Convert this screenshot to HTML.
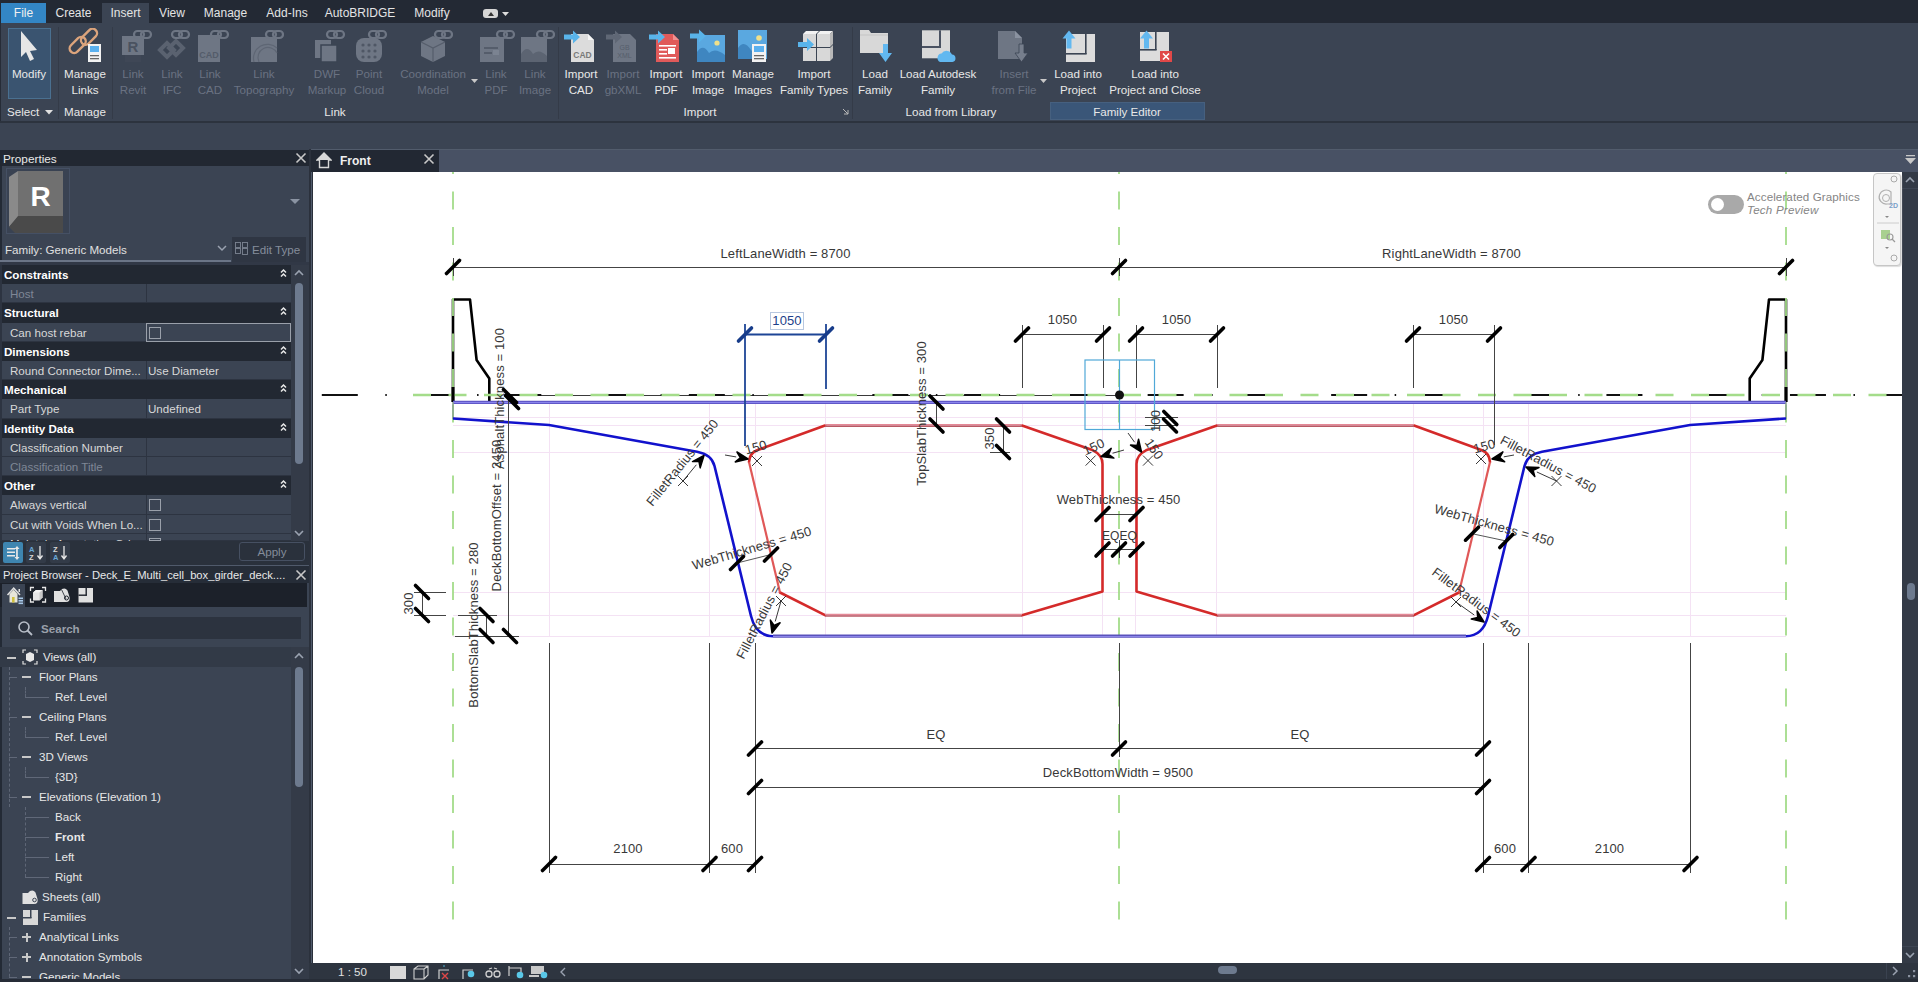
<!DOCTYPE html>
<html><head><meta charset="utf-8"><style>
html,body{margin:0;padding:0;width:1918px;height:982px;overflow:hidden;background:#3b4453;font-family:"Liberation Sans",sans-serif}
.r{position:absolute;display:block}
.t{position:absolute;white-space:nowrap;line-height:16px}
</style></head><body>
<div class="r" style="left:0px;top:0px;width:1918px;height:23px;background:#232934;"></div>
<div class="r" style="left:1px;top:3px;width:45px;height:20px;background:#3386c5;"></div>
<div class="r" style="left:102px;top:3px;width:47px;height:20px;background:#3b4453;"></div>
<div class="t" style="left:-176.5px;top:5px;width:400px;text-align:center;font-size:12px;color:#f0f0f0;font-weight:400;">File</div>
<div class="t" style="left:-126.5px;top:5px;width:400px;text-align:center;font-size:12px;color:#e4e4e4;font-weight:400;">Create</div>
<div class="t" style="left:-74.5px;top:5px;width:400px;text-align:center;font-size:12px;color:#e4e4e4;font-weight:400;">Insert</div>
<div class="t" style="left:-28px;top:5px;width:400px;text-align:center;font-size:12px;color:#e4e4e4;font-weight:400;">View</div>
<div class="t" style="left:25.5px;top:5px;width:400px;text-align:center;font-size:12px;color:#e4e4e4;font-weight:400;">Manage</div>
<div class="t" style="left:87px;top:5px;width:400px;text-align:center;font-size:12px;color:#e4e4e4;font-weight:400;">Add-Ins</div>
<div class="t" style="left:160px;top:5px;width:400px;text-align:center;font-size:12px;color:#e4e4e4;font-weight:400;">AutoBRIDGE</div>
<div class="t" style="left:232px;top:5px;width:400px;text-align:center;font-size:12px;color:#e4e4e4;font-weight:400;">Modify</div>
<div class="r" style="left:483px;top:9px;width:15px;height:9px;background:#d6d6d6;border-radius:3px"></div>
<svg class="r" style="left:486px;top:10px;" width="10" height="7" viewBox="0 0 10 7"><path d="M2 6 L5 2 L8 6Z" fill="#333"/></svg>
<svg class="r" style="left:502px;top:12px;" width="7" height="5" viewBox="0 0 7 5"><path d="M0 0 L7 0 L3.5 4Z" fill="#ddd"/></svg>
<div class="r" style="left:0px;top:23px;width:1918px;height:98px;background:#3b4453;"></div>
<div class="r" style="left:0px;top:23px;width:1px;height:959px;background:#262c37;"></div>
<div class="r" style="left:0px;top:121px;width:1918px;height:1.5px;background:#2c333e;"></div>
<div class="r" style="left:0px;top:122.5px;width:1918px;height:26.5px;background:#3b4453;"></div>
<div class="r" style="left:0px;top:149px;width:1918px;height:1px;background:#525c6c;"></div>
<div class="r" style="left:58px;top:27px;width:1px;height:92px;background:#343b48;"></div>
<div class="r" style="left:112px;top:27px;width:1px;height:92px;background:#343b48;"></div>
<div class="r" style="left:558px;top:27px;width:1px;height:92px;background:#343b48;"></div>
<div class="r" style="left:852px;top:27px;width:1px;height:92px;background:#343b48;"></div>
<div class="r" style="left:8px;top:28px;width:43px;height:71px;background:#3a5470;box-sizing:border-box;border:1px solid #4a7090"></div>
<div class="r" style="left:1050px;top:102px;width:155px;height:18px;background:#3a5678;box-sizing:border-box;border:1px solid #46607f"></div>
<svg class="r" style="left:9px;top:28px;" width="40" height="36" viewBox="0 0 40 36"><path d="M12 3 L12 29 L17 24 L21 33 L25 31 L21 23 L28 22 Z" fill="#e6e6e6"/></svg>
<div class="t" style="left:-171px;top:66px;width:400px;text-align:center;font-size:11.6px;color:#e8e8e8;font-weight:400;">Modify</div>
<svg class="r" style="left:65px;top:28px;" width="40" height="36" viewBox="0 0 40 36"><g fill="none" stroke="#dca47c" stroke-width="2.4"><rect x="3.2" y="12.4" width="19" height="9" rx="4.5" transform="rotate(-45 12.7 16.9)"/><rect x="14.5" y="4.3" width="19" height="9" rx="4.5" transform="rotate(-45 24 8.8)"/></g><rect x="23" y="16" width="13" height="18" fill="#f2f2f2"/><rect x="25" y="18" width="9" height="6" fill="#5ab0ee"/><rect x="25" y="27" width="9" height="1.3" fill="#666"/><rect x="25" y="30" width="9" height="1.3" fill="#666"/></svg>
<div class="t" style="left:-115px;top:66px;width:400px;text-align:center;font-size:11.6px;color:#e8e8e8;font-weight:400;">Manage</div>
<div class="t" style="left:-115px;top:82px;width:400px;text-align:center;font-size:11.6px;color:#e8e8e8;font-weight:400;">Links</div>
<svg class="r" style="left:113px;top:28px;" width="40" height="36" viewBox="0 0 40 36"><rect x="9" y="8" width="22" height="19" fill="#6e7684"/><text x="20" y="24" font-family="Liberation Sans" font-weight="700" font-size="15" fill="#4a5260" text-anchor="middle">R</text><rect x="12" y="27" width="16" height="7" fill="#3f4756"/><g fill="none" stroke="#6e7684" stroke-width="2.2"><rect x="21" y="3" width="10" height="7" rx="3.5"/><rect x="28" y="3" width="10" height="7" rx="3.5"/></g></svg>
<div class="t" style="left:-67px;top:66px;width:400px;text-align:center;font-size:11.6px;color:#6a7282;font-weight:400;">Link</div>
<div class="t" style="left:-67px;top:82px;width:400px;text-align:center;font-size:11.6px;color:#6a7282;font-weight:400;">Revit</div>
<svg class="r" style="left:152px;top:28px;" width="40" height="36" viewBox="0 0 40 36"><g fill="none" stroke="#5a6270" stroke-width="4"><path d="M8 22 L15 15 L22 22 L15 29Z"/><path d="M17 20 L24 13 L31 20 L24 27Z"/></g><g fill="none" stroke="#6e7684" stroke-width="2.2"><rect x="20" y="3" width="10" height="7" rx="3.5"/><rect x="27" y="3" width="10" height="7" rx="3.5"/></g></svg>
<div class="t" style="left:-28px;top:66px;width:400px;text-align:center;font-size:11.6px;color:#6a7282;font-weight:400;">Link</div>
<div class="t" style="left:-28px;top:82px;width:400px;text-align:center;font-size:11.6px;color:#6a7282;font-weight:400;">IFC</div>
<svg class="r" style="left:190px;top:28px;" width="40" height="36" viewBox="0 0 40 36"><rect x="8" y="7" width="22" height="27" fill="#6e7684"/><text x="19" y="30" font-family="Liberation Sans" font-weight="700" font-size="9" fill="#545c6a" text-anchor="middle">CAD</text><g fill="none" stroke="#6e7684" stroke-width="2.2"><rect x="21" y="3" width="10" height="7" rx="3.5"/><rect x="28" y="3" width="10" height="7" rx="3.5"/></g></svg>
<div class="t" style="left:10px;top:66px;width:400px;text-align:center;font-size:11.6px;color:#6a7282;font-weight:400;">Link</div>
<div class="t" style="left:10px;top:82px;width:400px;text-align:center;font-size:11.6px;color:#6a7282;font-weight:400;">CAD</div>
<svg class="r" style="left:244px;top:28px;" width="40" height="36" viewBox="0 0 40 36"><rect x="7" y="9" width="26" height="25" fill="#6e7684"/><g fill="none" stroke="#5e6674" stroke-width="1.2"><path d="M10 34 A14 14 0 0 1 33 20"/><path d="M15 34 A10 10 0 0 1 33 25"/></g><g fill="none" stroke="#6e7684" stroke-width="2.2"><rect x="22" y="3" width="10" height="7" rx="3.5"/><rect x="29" y="3" width="10" height="7" rx="3.5"/></g></svg>
<div class="t" style="left:64px;top:66px;width:400px;text-align:center;font-size:11.6px;color:#6a7282;font-weight:400;">Link</div>
<div class="t" style="left:64px;top:82px;width:400px;text-align:center;font-size:11.6px;color:#6a7282;font-weight:400;">Topography</div>
<svg class="r" style="left:307px;top:28px;" width="40" height="36" viewBox="0 0 40 36"><rect x="8" y="12" width="16" height="18" fill="#6e7684"/><rect x="14" y="17" width="16" height="17" fill="#6e7684" stroke="#3b4453" stroke-width="1.5"/><g fill="none" stroke="#6e7684" stroke-width="2.2"><rect x="20" y="3" width="10" height="7" rx="3.5"/><rect x="27" y="3" width="10" height="7" rx="3.5"/></g></svg>
<div class="t" style="left:127px;top:66px;width:400px;text-align:center;font-size:11.6px;color:#6a7282;font-weight:400;">DWF</div>
<div class="t" style="left:127px;top:82px;width:400px;text-align:center;font-size:11.6px;color:#6a7282;font-weight:400;">Markup</div>
<svg class="r" style="left:349px;top:28px;" width="40" height="36" viewBox="0 0 40 36"><rect x="7" y="10" width="26" height="24" rx="8" fill="#6e7684"/><g fill="#4f5765"><circle cx="14" cy="17" r="1.6"/><circle cx="20" cy="17" r="1.6"/><circle cx="26" cy="17" r="1.6"/><circle cx="14" cy="23" r="1.6"/><circle cx="20" cy="23" r="1.6"/><circle cx="26" cy="23" r="1.6"/><circle cx="14" cy="29" r="1.6"/><circle cx="20" cy="29" r="1.6"/><circle cx="26" cy="29" r="1.6"/></g><g fill="none" stroke="#6e7684" stroke-width="2.2"><rect x="20" y="3" width="10" height="7" rx="3.5"/><rect x="27" y="3" width="10" height="7" rx="3.5"/></g></svg>
<div class="t" style="left:169px;top:66px;width:400px;text-align:center;font-size:11.6px;color:#6a7282;font-weight:400;">Point</div>
<div class="t" style="left:169px;top:82px;width:400px;text-align:center;font-size:11.6px;color:#6a7282;font-weight:400;">Cloud</div>
<svg class="r" style="left:413px;top:28px;" width="40" height="36" viewBox="0 0 40 36"><path d="M20 8 L32 14 L32 28 L20 34 L8 28 L8 14Z" fill="#6e7684"/><path d="M8 14 L20 20 L32 14 M20 20 V34" stroke="#555d6b" stroke-width="1.2" fill="none"/><g fill="none" stroke="#6e7684" stroke-width="2.2"><rect x="22" y="3" width="10" height="7" rx="3.5"/><rect x="29" y="3" width="10" height="7" rx="3.5"/></g></svg>
<div class="t" style="left:233px;top:66px;width:400px;text-align:center;font-size:11.6px;color:#6a7282;font-weight:400;">Coordination</div>
<div class="t" style="left:233px;top:82px;width:400px;text-align:center;font-size:11.6px;color:#6a7282;font-weight:400;">Model</div>
<svg class="r" style="left:476px;top:28px;" width="40" height="36" viewBox="0 0 40 36"><rect x="4" y="9" width="24" height="25" fill="#6e7684"/><rect x="8" y="19" width="14" height="2" fill="#555d6b"/><rect x="8" y="24" width="8" height="2" fill="#555d6b"/><rect x="17" y="22" width="6" height="5" fill="#7b8391"/><g fill="none" stroke="#6e7684" stroke-width="2.2"><rect x="21" y="3" width="10" height="7" rx="3.5"/><rect x="28" y="3" width="10" height="7" rx="3.5"/></g></svg>
<div class="t" style="left:296px;top:66px;width:400px;text-align:center;font-size:11.6px;color:#6a7282;font-weight:400;">Link</div>
<div class="t" style="left:296px;top:82px;width:400px;text-align:center;font-size:11.6px;color:#6a7282;font-weight:400;">PDF</div>
<svg class="r" style="left:515px;top:28px;" width="40" height="36" viewBox="0 0 40 36"><rect x="6" y="9" width="26" height="25" fill="#6e7684"/><path d="M6 34 L6 26 Q12 16 18 26 Q24 20 32 28 L32 34Z" fill="#5c6472"/><g fill="none" stroke="#6e7684" stroke-width="2.2"><rect x="22" y="3" width="10" height="7" rx="3.5"/><rect x="29" y="3" width="10" height="7" rx="3.5"/></g></svg>
<div class="t" style="left:335px;top:66px;width:400px;text-align:center;font-size:11.6px;color:#6a7282;font-weight:400;">Link</div>
<div class="t" style="left:335px;top:82px;width:400px;text-align:center;font-size:11.6px;color:#6a7282;font-weight:400;">Image</div>
<svg class="r" style="left:561px;top:28px;" width="40" height="36" viewBox="0 0 40 36"><path d="M10 6 H27 L33 12 V34 H10Z" fill="#dcdcdc"/><path d="M27 6 L33 12 H27Z" fill="#f6f6f6"/><text x="21.5" y="30" font-family="Liberation Sans" font-weight="700" font-size="8.5" fill="#7a7a7a" text-anchor="middle">CAD</text><path d="M3 6.5 h9 v-4 l7 6.5 l-7 6.5 v-4 h-9z" fill="#59b4ea"/></svg>
<div class="t" style="left:381px;top:66px;width:400px;text-align:center;font-size:11.6px;color:#e8e8e8;font-weight:400;">Import</div>
<div class="t" style="left:381px;top:82px;width:400px;text-align:center;font-size:11.6px;color:#e8e8e8;font-weight:400;">CAD</div>
<svg class="r" style="left:603px;top:28px;" width="40" height="36" viewBox="0 0 40 36"><path d="M10 6 H27 L33 12 V34 H10Z" fill="#6e7684"/><text x="21.5" y="22" font-family="Liberation Sans" font-size="7" fill="#565e6c" text-anchor="middle">GB</text><text x="21.5" y="30" font-family="Liberation Sans" font-size="7" fill="#565e6c" text-anchor="middle">XML</text><path d="M3 6.5 h9 v-4 l7 6.5 l-7 6.5 v-4 h-9z" fill="#5f6775"/></svg>
<div class="t" style="left:423px;top:66px;width:400px;text-align:center;font-size:11.6px;color:#6a7282;font-weight:400;">Import</div>
<div class="t" style="left:423px;top:82px;width:400px;text-align:center;font-size:11.6px;color:#6a7282;font-weight:400;">gbXML</div>
<svg class="r" style="left:646px;top:28px;" width="40" height="36" viewBox="0 0 40 36"><path d="M10 6 H27 L33 12 V34 H10Z" fill="#e05a5a"/><path d="M27 6 L33 12 H27Z" fill="#f09090"/><rect x="13" y="17" width="17" height="1.6" fill="#fff"/><rect x="13" y="21" width="8" height="1.6" fill="#fff"/><rect x="13" y="25" width="8" height="1.6" fill="#fff"/><rect x="22" y="20" width="7" height="6" fill="#fff"/><rect x="13" y="29" width="17" height="1.6" fill="#fff"/><path d="M3 6.5 h9 v-4 l7 6.5 l-7 6.5 v-4 h-9z" fill="#59b4ea"/></svg>
<div class="t" style="left:466px;top:66px;width:400px;text-align:center;font-size:11.6px;color:#e8e8e8;font-weight:400;">Import</div>
<div class="t" style="left:466px;top:82px;width:400px;text-align:center;font-size:11.6px;color:#e8e8e8;font-weight:400;">PDF</div>
<svg class="r" style="left:688px;top:28px;" width="40" height="36" viewBox="0 0 40 36"><rect x="9" y="7" width="28" height="27" fill="#5aa8e0"/><path d="M9 34 V24 Q15 15 21 25 Q27 19 37 27 V34Z" fill="#3f86c0"/><circle cx="29" cy="15" r="2.6" fill="#f0e08a"/><path d="M2 5.5 h9 v-4 l7 6.5 l-7 6.5 v-4 h-9z" fill="#59b4ea"/></svg>
<div class="t" style="left:508px;top:66px;width:400px;text-align:center;font-size:11.6px;color:#e8e8e8;font-weight:400;">Import</div>
<div class="t" style="left:508px;top:82px;width:400px;text-align:center;font-size:11.6px;color:#e8e8e8;font-weight:400;">Image</div>
<svg class="r" style="left:733px;top:28px;" width="40" height="36" viewBox="0 0 40 36"><rect x="5" y="2" width="29" height="29" fill="#5aa8e0"/><path d="M5 31 V20 Q11 11 18 22 L27 31Z" fill="#3f86c0"/><circle cx="26" cy="10" r="2.8" fill="#f0e08a"/><rect x="19" y="16" width="14" height="18" fill="#f2f2f2"/><rect x="21" y="18" width="10" height="6" fill="#5ab0ee"/><rect x="21" y="27" width="10" height="1.3" fill="#666"/><rect x="21" y="30" width="10" height="1.3" fill="#666"/></svg>
<div class="t" style="left:553px;top:66px;width:400px;text-align:center;font-size:11.6px;color:#e8e8e8;font-weight:400;">Manage</div>
<div class="t" style="left:553px;top:82px;width:400px;text-align:center;font-size:11.6px;color:#e8e8e8;font-weight:400;">Images</div>
<svg class="r" style="left:794px;top:28px;" width="40" height="36" viewBox="0 0 40 36"><g fill="#d8d8d8"><rect x="9" y="6" width="13" height="13"/><rect x="23" y="6" width="13" height="13"/><rect x="9" y="20" width="13" height="13"/><rect x="23" y="20" width="13" height="13"/></g><g fill="#f2f2f2"><path d="M9 6 L12 3 H25 L22 6Z"/><path d="M23 6 L26 3 H39 L36 6Z"/></g><g fill="#b8b8b8"><path d="M36 6 L39 3 V16 L36 19Z"/><path d="M36 20 L39 17 V30 L36 33Z"/></g><path d="M4 14.0 h9 v-4 l7 6.5 l-7 6.5 v-4 h-9z" fill="#59b4ea"/></svg>
<div class="t" style="left:614px;top:66px;width:400px;text-align:center;font-size:11.6px;color:#e8e8e8;font-weight:400;">Import</div>
<div class="t" style="left:614px;top:82px;width:400px;text-align:center;font-size:11.6px;color:#e8e8e8;font-weight:400;">Family Types</div>
<svg class="r" style="left:855px;top:28px;" width="40" height="36" viewBox="0 0 40 36"><path d="M5 2 H14 L16 5 H33 V25 H5Z" fill="#d8d8d8"/><path d="M5 7 H33" stroke="#c0c0c0" stroke-width="0.8"/><path d="M28 16 h5 v9 h4 l-6.5 9 l-6.5 -9 h4z" fill="#62b8f0"/></svg>
<div class="t" style="left:675px;top:66px;width:400px;text-align:center;font-size:11.6px;color:#e8e8e8;font-weight:400;">Load</div>
<div class="t" style="left:675px;top:82px;width:400px;text-align:center;font-size:11.6px;color:#e8e8e8;font-weight:400;">Family</div>
<svg class="r" style="left:918px;top:28px;" width="40" height="36" viewBox="0 0 40 36"><rect x="4" y="2.3" width="28" height="28" fill="#d8d8d8"/><rect x="21" y="2.3" width="2" height="17.5" fill="#4a5262"/><rect x="4" y="18" width="19" height="2" fill="#4a5262"/><path d="M22 34 a4.5 4.5 0 0 1 1.5 -8.5 a6 6 0 0 1 10.5 1 a3.8 3.8 0 0 1 0.5 7.5z" fill="#62b8f0"/></svg>
<div class="t" style="left:738px;top:66px;width:400px;text-align:center;font-size:11.6px;color:#e8e8e8;font-weight:400;">Load Autodesk</div>
<div class="t" style="left:738px;top:82px;width:400px;text-align:center;font-size:11.6px;color:#e8e8e8;font-weight:400;">Family</div>
<svg class="r" style="left:994px;top:28px;" width="40" height="36" viewBox="0 0 40 36"><path d="M4 3 H21 L28 10 V31 H4Z" fill="#6e7684"/><path d="M21 3 L28 10 H21Z" fill="#8a92a0"/><path d="M25 16 h5 v9 h4 l-6.5 9 l-6.5 -9 h4z" fill="#767e8c" stroke="#3b4453" stroke-width="0.8"/></svg>
<div class="t" style="left:814px;top:66px;width:400px;text-align:center;font-size:11.6px;color:#6a7282;font-weight:400;">Insert</div>
<div class="t" style="left:814px;top:82px;width:400px;text-align:center;font-size:11.6px;color:#6a7282;font-weight:400;">from File</div>
<svg class="r" style="left:1058px;top:28px;" width="40" height="36" viewBox="0 0 40 36"><rect x="8" y="6" width="29" height="28" fill="#dcdcdc"/><rect x="27" y="6" width="1.6" height="20" fill="#3b4453"/><rect x="8" y="25" width="20.6" height="1.6" fill="#3b4453"/><path d="M11 2.5 l-6.5 8 h4 v10 h5 v-10 h4z" fill="#62b8f0"/></svg>
<div class="t" style="left:878px;top:66px;width:400px;text-align:center;font-size:11.6px;color:#e8e8e8;font-weight:400;">Load into</div>
<div class="t" style="left:878px;top:82px;width:400px;text-align:center;font-size:11.6px;color:#e8e8e8;font-weight:400;">Project</div>
<svg class="r" style="left:1135px;top:28px;" width="40" height="36" viewBox="0 0 40 36"><rect x="5" y="4" width="29" height="29" fill="#dcdcdc"/><rect x="20" y="4" width="1.6" height="18" fill="#3b4453"/><rect x="5" y="21" width="16.6" height="1.6" fill="#3b4453"/><path d="M11.5 2.5 l-6.5 8 h4 v10 h5 v-10 h4z" fill="#62b8f0"/><rect x="25" y="23" width="12" height="11" fill="#e04848"/><path d="M28 25.5 L34 31.5 M34 25.5 L28 31.5" stroke="#fff" stroke-width="1.6"/></svg>
<div class="t" style="left:955px;top:66px;width:400px;text-align:center;font-size:11.6px;color:#e8e8e8;font-weight:400;">Load into</div>
<div class="t" style="left:955px;top:82px;width:400px;text-align:center;font-size:11.6px;color:#e8e8e8;font-weight:400;">Project and Close</div>
<svg class="r" style="left:471px;top:79px;" width="7" height="5" viewBox="0 0 7 5"><path d="M0 0 H7 L3.5 4Z" fill="#c8c8c8"/></svg>
<svg class="r" style="left:1040px;top:79px;" width="7" height="5" viewBox="0 0 7 5"><path d="M0 0 H7 L3.5 4Z" fill="#c8c8c8"/></svg>
<div class="t" style="left:7px;top:104px;font-size:11.6px;color:#e8e8e8;font-weight:400;">Select</div>
<svg class="r" style="left:45px;top:110px;" width="8" height="5" viewBox="0 0 8 5"><path d="M0 0 H8 L4 4.5Z" fill="#e0e0e0"/></svg>
<div class="t" style="left:-115px;top:104px;width:400px;text-align:center;font-size:11.6px;color:#e8e8e8;font-weight:400;">Manage</div>
<div class="t" style="left:135px;top:104px;width:400px;text-align:center;font-size:11.6px;color:#e8e8e8;font-weight:400;">Link</div>
<div class="t" style="left:500px;top:104px;width:400px;text-align:center;font-size:11.6px;color:#e8e8e8;font-weight:400;">Import</div>
<svg class="r" style="left:842px;top:108px;" width="8" height="8" viewBox="0 0 8 8"><path d="M1 1 L6 6 M6 2 V6 H2" stroke="#b8b8b8" stroke-width="1" fill="none"/></svg>
<div class="t" style="left:751px;top:104px;width:400px;text-align:center;font-size:11.6px;color:#e8e8e8;font-weight:400;">Load from Library</div>
<div class="t" style="left:927px;top:104px;width:400px;text-align:center;font-size:11.6px;color:#e8e8e8;font-weight:400;">Family Editor</div>
<div class="r" style="left:0px;top:149px;width:310px;height:833px;background:#3b4453;"></div>
<div class="r" style="left:309px;top:149px;width:3px;height:833px;background:#2b313c;"></div>
<div class="r" style="left:0px;top:150px;width:2px;height:832px;background:#232a35;"></div>
<div class="r" style="left:311px;top:149px;width:1px;height:833px;background:#505a6b;"></div>
<div class="r" style="left:0px;top:150px;width:309px;height:16px;background:#222832;"></div>
<div class="t" style="left:3px;top:151px;font-size:11.8px;color:#e8e8e8;font-weight:400;">Properties</div>
<svg class="r" style="left:295px;top:152px;" width="12" height="12" viewBox="0 0 12 12"><path d="M1.5 1.5 L10.5 10.5 M10.5 1.5 L1.5 10.5" stroke="#c8c8c8" stroke-width="1.6"/></svg>
<div class="r" style="left:6px;top:168px;width:64px;height:66px;background:#394252;box-sizing:border-box;border:1px solid #455064"></div>
<svg class="r" style="left:7px;top:169px;" width="62" height="64" viewBox="0 0 62 64"><path d="M2 8 L11 2 L11 48 L2 58Z" fill="#8a8a8a"/><rect x="11" y="2" width="45" height="45" fill="#707070"/><path d="M11 47 H56 V64 H8 L2 58Z" fill="#4a4a4a"/><text x="33.5" y="37" font-family="Liberation Sans" font-weight="700" font-size="28" fill="#ffffff" text-anchor="middle">R</text></svg>
<svg class="r" style="left:290px;top:199px;" width="10" height="6" viewBox="0 0 10 6"><path d="M0 0 H10 L5 5Z" fill="#8a93a2"/></svg>
<div class="t" style="left:5px;top:242px;font-size:11.6px;color:#e0e0e0;font-weight:400;">Family: Generic Models</div>
<svg class="r" style="left:217px;top:245px;" width="10" height="7" viewBox="0 0 10 7"><path d="M1 1 L5 5 L9 1" stroke="#9aa2b0" stroke-width="1.5" fill="none"/></svg>
<div class="r" style="left:0px;top:260px;width:231px;height:2px;background:#6b7587;"></div>
<div class="r" style="left:232px;top:237px;width:74px;height:26px;background:#2f3643;"></div>
<svg class="r" style="left:235px;top:241px;" width="14" height="15" viewBox="0 0 14 15"><g fill="none" stroke="#7c8492" stroke-width="0.9"><rect x="0.5" y="1.5" width="5" height="5"/><rect x="0.5" y="7.5" width="5" height="5"/><rect x="7.5" y="1.5" width="5" height="5"/><rect x="7.5" y="7.5" width="5" height="6"/></g></svg>
<div class="t" style="left:252px;top:242px;font-size:11.6px;color:#858d9b;font-weight:400;">Edit Type</div>
<div class="r" style="left:0px;top:262px;width:309px;height:3px;background:#313846;"></div>
<div class="r" style="left:0px;top:265px;width:291px;height:276px;background:#2d3441;"></div>
<div class="r" style="left:2px;top:265px;width:289px;height:19px;background:#222832;"></div>
<div class="t" style="left:4px;top:266.5px;font-size:11.6px;color:#ffffff;font-weight:700;">Constraints</div>
<svg class="r" style="left:279px;top:268px;" width="9" height="11" viewBox="0 0 9 11"><path d="M2 4.5 L4.5 2 L7 4.5 M2 8.5 L4.5 6 L7 8.5" stroke="#e8e8e8" stroke-width="1.5" fill="none"/></svg>
<div class="r" style="left:2px;top:284px;width:144px;height:18px;background:#3b4453;"></div>
<div class="r" style="left:147px;top:284px;width:144px;height:18px;background:#3b4453;"></div>
<div class="t" style="left:10px;top:285.5px;font-size:11.6px;color:#7f8796;font-weight:400;">Host</div>
<div class="r" style="left:2px;top:303px;width:289px;height:20px;background:#222832;"></div>
<div class="t" style="left:4px;top:304.5px;font-size:11.6px;color:#ffffff;font-weight:700;">Structural</div>
<svg class="r" style="left:279px;top:306px;" width="9" height="11" viewBox="0 0 9 11"><path d="M2 4.5 L4.5 2 L7 4.5 M2 8.5 L4.5 6 L7 8.5" stroke="#e8e8e8" stroke-width="1.5" fill="none"/></svg>
<div class="r" style="left:2px;top:323px;width:144px;height:18px;background:#3b4453;"></div>
<div class="r" style="left:147px;top:323px;width:144px;height:18px;background:#3b4453;"></div>
<div class="t" style="left:10px;top:324.5px;font-size:11.6px;color:#d8d8d8;font-weight:400;">Can host rebar</div>
<div class="r" style="left:146px;top:323px;width:145px;height:19px;background:transparent;box-sizing:border-box;border:1.5px solid #9aa0aa"></div>
<div class="r" style="left:149px;top:327px;width:12px;height:12px;background:transparent;box-sizing:border-box;border:1.5px solid #9aa0aa"></div>
<div class="r" style="left:2px;top:342px;width:289px;height:19px;background:#222832;"></div>
<div class="t" style="left:4px;top:343.5px;font-size:11.6px;color:#ffffff;font-weight:700;">Dimensions</div>
<svg class="r" style="left:279px;top:345px;" width="9" height="11" viewBox="0 0 9 11"><path d="M2 4.5 L4.5 2 L7 4.5 M2 8.5 L4.5 6 L7 8.5" stroke="#e8e8e8" stroke-width="1.5" fill="none"/></svg>
<div class="r" style="left:2px;top:361px;width:144px;height:18px;background:#3b4453;"></div>
<div class="r" style="left:147px;top:361px;width:144px;height:18px;background:#3b4453;"></div>
<div class="t" style="left:10px;top:362.5px;font-size:11.6px;color:#d8d8d8;font-weight:400;">Round Connector Dime...</div>
<div class="t" style="left:148px;top:362.5px;font-size:11.6px;color:#d8d8d8;font-weight:400;">Use Diameter</div>
<div class="r" style="left:2px;top:380px;width:289px;height:19px;background:#222832;"></div>
<div class="t" style="left:4px;top:381.5px;font-size:11.6px;color:#ffffff;font-weight:700;">Mechanical</div>
<svg class="r" style="left:279px;top:383px;" width="9" height="11" viewBox="0 0 9 11"><path d="M2 4.5 L4.5 2 L7 4.5 M2 8.5 L4.5 6 L7 8.5" stroke="#e8e8e8" stroke-width="1.5" fill="none"/></svg>
<div class="r" style="left:2px;top:399px;width:144px;height:19px;background:#3b4453;"></div>
<div class="r" style="left:147px;top:399px;width:144px;height:19px;background:#3b4453;"></div>
<div class="t" style="left:10px;top:400.5px;font-size:11.6px;color:#d8d8d8;font-weight:400;">Part Type</div>
<div class="t" style="left:148px;top:400.5px;font-size:11.6px;color:#d8d8d8;font-weight:400;">Undefined</div>
<div class="r" style="left:2px;top:419px;width:289px;height:19px;background:#222832;"></div>
<div class="t" style="left:4px;top:420.5px;font-size:11.6px;color:#ffffff;font-weight:700;">Identity Data</div>
<svg class="r" style="left:279px;top:422px;" width="9" height="11" viewBox="0 0 9 11"><path d="M2 4.5 L4.5 2 L7 4.5 M2 8.5 L4.5 6 L7 8.5" stroke="#e8e8e8" stroke-width="1.5" fill="none"/></svg>
<div class="r" style="left:2px;top:438px;width:144px;height:18px;background:#3b4453;"></div>
<div class="r" style="left:147px;top:438px;width:144px;height:18px;background:#3b4453;"></div>
<div class="t" style="left:10px;top:439.5px;font-size:11.6px;color:#d8d8d8;font-weight:400;">Classification Number</div>
<div class="r" style="left:2px;top:457px;width:144px;height:18px;background:#3b4453;"></div>
<div class="r" style="left:147px;top:457px;width:144px;height:18px;background:#3b4453;"></div>
<div class="t" style="left:10px;top:458.5px;font-size:11.6px;color:#7f8796;font-weight:400;">Classification Title</div>
<div class="r" style="left:2px;top:476px;width:289px;height:19px;background:#222832;"></div>
<div class="t" style="left:4px;top:477.5px;font-size:11.6px;color:#ffffff;font-weight:700;">Other</div>
<svg class="r" style="left:279px;top:479px;" width="9" height="11" viewBox="0 0 9 11"><path d="M2 4.5 L4.5 2 L7 4.5 M2 8.5 L4.5 6 L7 8.5" stroke="#e8e8e8" stroke-width="1.5" fill="none"/></svg>
<div class="r" style="left:2px;top:495px;width:144px;height:19px;background:#3b4453;"></div>
<div class="r" style="left:147px;top:495px;width:144px;height:19px;background:#3b4453;"></div>
<div class="t" style="left:10px;top:496.5px;font-size:11.6px;color:#d8d8d8;font-weight:400;">Always vertical</div>
<div class="r" style="left:149px;top:499px;width:12px;height:12px;background:transparent;box-sizing:border-box;border:1.5px solid #9aa0aa"></div>
<div class="r" style="left:2px;top:515px;width:144px;height:18px;background:#3b4453;"></div>
<div class="r" style="left:147px;top:515px;width:144px;height:18px;background:#3b4453;"></div>
<div class="t" style="left:10px;top:516.5px;font-size:11.6px;color:#d8d8d8;font-weight:400;">Cut with Voids When Lo...</div>
<div class="r" style="left:149px;top:519px;width:12px;height:12px;background:transparent;box-sizing:border-box;border:1.5px solid #9aa0aa"></div>
<div class="r" style="left:2px;top:534px;width:144px;height:6px;background:#3b4453;"></div>
<div class="r" style="left:147px;top:534px;width:144px;height:6px;background:#3b4453;"></div>
<div class="t" style="left:10px;top:535.5px;font-size:11.6px;color:#d8d8d8;font-weight:400;height:5.5px;overflow:hidden">Maintain Annotation Orie...</div>
<div class="r" style="left:149px;top:538px;width:12px;height:3px;background:transparent;box-sizing:border-box;border:1.5px solid #9aa0aa"></div>
<div class="r" style="left:291px;top:265px;width:18px;height:276px;background:#343b48;"></div>
<svg class="r" style="left:292px;top:266px;" width="14" height="14" viewBox="0 0 14 14"><path d="M3 9 L7 5 L11 9" stroke="#9aa2b0" stroke-width="1.6" fill="none"/></svg>
<div class="r" style="left:295px;top:283px;width:8px;height:181px;background:#6d7a8e;border-radius:4px"></div>
<svg class="r" style="left:292px;top:526px;" width="14" height="14" viewBox="0 0 14 14"><path d="M3 5 L7 9 L11 5" stroke="#9aa2b0" stroke-width="1.6" fill="none"/></svg>
<div class="r" style="left:0px;top:541px;width:309px;height:25px;background:#2a313c;"></div>
<div class="r" style="left:3px;top:542px;width:20px;height:21px;background:#3e85b0;border-radius:2px"></div>
<div class="r" style="left:26px;top:542px;width:20px;height:21px;background:#333b48;border-radius:2px"></div>
<div class="r" style="left:50px;top:542px;width:20px;height:21px;background:#333b48;border-radius:2px"></div>
<svg class="r" style="left:5px;top:544px;" width="16" height="17" viewBox="0 0 16 17"><g fill="#e8e8e8"><rect x="2" y="4" width="8" height="1.5"/><rect x="2" y="7.5" width="8" height="1.5"/><rect x="2" y="11" width="8" height="1.5"/><path d="M12 2 l2.5 3 h-1.7 v8 h1.7 l-2.5 3 l-2.5 -3 h1.6 v-8 h-1.6z"/></g></svg>
<svg class="r" style="left:28px;top:544px;" width="16" height="17" viewBox="0 0 16 17"><text x="1" y="8" font-family="Liberation Sans" font-size="7.5" font-weight="700" fill="#6aa8d8">A</text><text x="1" y="16" font-family="Liberation Sans" font-size="7.5" font-weight="700" fill="#d8d8d8">Z</text><path d="M12 2 V14 M9.5 11.5 L12 15 L14.5 11.5" stroke="#e8e8e8" stroke-width="1.3" fill="none"/></svg>
<svg class="r" style="left:52px;top:544px;" width="16" height="17" viewBox="0 0 16 17"><text x="1" y="8" font-family="Liberation Sans" font-size="7.5" font-weight="700" fill="#d8d8d8">Z</text><text x="1" y="16" font-family="Liberation Sans" font-size="7.5" font-weight="700" fill="#6aa8d8">A</text><path d="M12 2 V14 M9.5 11.5 L12 15 L14.5 11.5" stroke="#e8e8e8" stroke-width="1.3" fill="none"/></svg>
<div class="r" style="left:239px;top:542px;width:66px;height:19px;background:transparent;box-sizing:border-box;border:1px solid #465062;border-radius:3px"></div>
<div class="t" style="left:72px;top:544px;width:400px;text-align:center;font-size:11.6px;color:#848c9a;font-weight:400;">Apply</div>
<div class="r" style="left:0px;top:565px;width:309px;height:1px;background:#505a6b;"></div>
<div class="r" style="left:0px;top:566px;width:309px;height:17px;background:#262d38;"></div>
<div class="t" style="left:3px;top:567px;font-size:11.2px;color:#e8e8e8;font-weight:400;">Project Browser - Deck_E_Multi_cell_box_girder_deck....</div>
<svg class="r" style="left:295px;top:569px;" width="12" height="12" viewBox="0 0 12 12"><path d="M1.5 1.5 L10.5 10.5 M10.5 1.5 L1.5 10.5" stroke="#c8c8c8" stroke-width="1.6"/></svg>
<div class="r" style="left:0px;top:583px;width:307px;height:24px;background:#1c212a;"></div>
<div class="r" style="left:2px;top:584px;width:23px;height:23px;background:#3b4453;"></div>
<svg class="r" style="left:2px;top:583px;" width="100" height="25" viewBox="0 0 100 25"><path d="M5.5 12 L11.7 5.2 L18 12" stroke="#e0e0e0" stroke-width="1.5" fill="none"/><path d="M7.5 11 L11.7 6.8 L15.5 11 V19.5 H7.5Z" fill="#e8e6da"/><rect x="10" y="14" width="2.6" height="5.5" fill="#d0c040"/><rect x="16.5" y="6" width="1.5" height="3" fill="#e0e0e0"/><g fill="#a8c8e8"><rect x="16.5" y="14.5" width="4.5" height="1.6"/><rect x="16.5" y="17" width="4.5" height="1.6"/><rect x="16.5" y="19.5" width="4.5" height="1.6"/></g><g stroke="#e8e8e8" stroke-width="1.3" fill="none"><path d="M28.5 8 V4.5 H32 M40 4.5 H43.5 V8 M43.5 15.5 V19 H40 M32 19 H28.5 V15.5"/></g><path d="M31 9.5 L34 7 H40.5 V14.5 L37.5 17.5 H31Z" fill="#e6e6e6"/><path d="M31 9.5 L34 7 H40.5 L37.5 9.5Z" fill="#f4f4f4"/><path d="M37.5 9.5 L40.5 7 V14.5 L37.5 17.5Z" fill="#c8c8c8"/><path d="M52 8 H58 L60 6 Q63.5 4.5 65.5 7.5 L67.5 14 Q68.5 19 64 19 H52Z" fill="#e0e0e0"/><circle cx="64.5" cy="15" r="2" fill="none" stroke="#1c212a" stroke-width="1"/><path d="M59.5 6.5 L64 16" stroke="#1c212a" stroke-width="0.8"/><rect x="76.5" y="5" width="14.5" height="14.5" fill="#e0e0e0"/><rect x="83.5" y="5" width="1.4" height="7.5" fill="#1c212a"/><rect x="76.5" y="11.5" width="8.4" height="1.4" fill="#1c212a"/></svg>
<div class="r" style="left:10px;top:617px;width:291px;height:22px;background:#2c333f;"></div>
<svg class="r" style="left:17px;top:620px;" width="17" height="17" viewBox="0 0 17 17"><circle cx="7" cy="7" r="5" stroke="#b8bec8" stroke-width="1.6" fill="none"/><path d="M10.5 10.5 L15 15" stroke="#b8bec8" stroke-width="1.8"/></svg>
<div class="t" style="left:41px;top:621px;font-size:11.6px;color:#9aa0aa;font-weight:700;">Search</div>
<div class="r" style="left:0px;top:647px;width:291px;height:20px;background:#323a47;"></div>
<div class="r" style="left:7px;top:657px;width:9px;height:2px;background:#c8c8c8;"></div>
<svg class="r" style="left:22px;top:649px;" width="16" height="16" viewBox="0 0 16 16"><g stroke="#e0e0e0" stroke-width="1.2" fill="none"><path d="M1 4 V1 H4 M12 1 H15 V4 M15 12 V15 H12 M4 15 H1 V12"/></g><path d="M4 5 L8 3 L12 5 V11 L8 13 L4 11Z" fill="#e8e8e8"/></svg>
<div class="t" style="left:43px;top:649px;font-size:11.6px;color:#e8e8e8;font-weight:400;">Views (all)</div>
<div class="r" style="left:9px;top:677px;width:8px;height:1px;background:#6a7282;opacity:.8"></div>
<div class="r" style="left:22px;top:676px;width:9px;height:2px;background:#c8c8c8;"></div>
<div class="t" style="left:39px;top:669px;font-size:11.6px;color:#e8e8e8;font-weight:400;">Floor Plans</div>
<div class="r" style="left:25px;top:697px;width:24px;height:1px;background:#6a7282;opacity:.8"></div>
<div class="t" style="left:55px;top:689px;font-size:11.6px;color:#e8e8e8;font-weight:400;">Ref. Level</div>
<div class="r" style="left:9px;top:717px;width:8px;height:1px;background:#6a7282;opacity:.8"></div>
<div class="r" style="left:22px;top:716px;width:9px;height:2px;background:#c8c8c8;"></div>
<div class="t" style="left:39px;top:709px;font-size:11.6px;color:#e8e8e8;font-weight:400;">Ceiling Plans</div>
<div class="r" style="left:25px;top:737px;width:24px;height:1px;background:#6a7282;opacity:.8"></div>
<div class="t" style="left:55px;top:729px;font-size:11.6px;color:#e8e8e8;font-weight:400;">Ref. Level</div>
<div class="r" style="left:9px;top:757px;width:8px;height:1px;background:#6a7282;opacity:.8"></div>
<div class="r" style="left:22px;top:756px;width:9px;height:2px;background:#c8c8c8;"></div>
<div class="t" style="left:39px;top:749px;font-size:11.6px;color:#e8e8e8;font-weight:400;">3D Views</div>
<div class="r" style="left:25px;top:777px;width:24px;height:1px;background:#6a7282;opacity:.8"></div>
<div class="t" style="left:55px;top:769px;font-size:11.6px;color:#e8e8e8;font-weight:400;">{3D}</div>
<div class="r" style="left:9px;top:797px;width:8px;height:1px;background:#6a7282;opacity:.8"></div>
<div class="r" style="left:22px;top:796px;width:9px;height:2px;background:#c8c8c8;"></div>
<div class="t" style="left:39px;top:789px;font-size:11.6px;color:#e8e8e8;font-weight:400;">Elevations (Elevation 1)</div>
<div class="r" style="left:25px;top:817px;width:24px;height:1px;background:#6a7282;opacity:.8"></div>
<div class="t" style="left:55px;top:809px;font-size:11.6px;color:#e8e8e8;font-weight:400;">Back</div>
<div class="r" style="left:25px;top:837px;width:24px;height:1px;background:#6a7282;opacity:.8"></div>
<div class="t" style="left:55px;top:829px;font-size:11.6px;color:#e8e8e8;font-weight:700;">Front</div>
<div class="r" style="left:25px;top:857px;width:24px;height:1px;background:#6a7282;opacity:.8"></div>
<div class="t" style="left:55px;top:849px;font-size:11.6px;color:#e8e8e8;font-weight:400;">Left</div>
<div class="r" style="left:25px;top:877px;width:24px;height:1px;background:#6a7282;opacity:.8"></div>
<div class="t" style="left:55px;top:869px;font-size:11.6px;color:#e8e8e8;font-weight:400;">Right</div>
<svg class="r" style="left:22px;top:889px;" width="17" height="16" viewBox="0 0 17 16"><path d="M0.5 4 H6 L8 2 Q11.5 0.5 13.5 3.5 L15.5 10 Q16.5 15 12 15 H0.5Z" fill="#e0e0e0"/><circle cx="12.5" cy="11" r="1.8" fill="none" stroke="#3b4453" stroke-width="1"/></svg>
<div class="t" style="left:42px;top:889px;font-size:11.6px;color:#e8e8e8;font-weight:400;">Sheets (all)</div>
<div class="r" style="left:7px;top:917px;width:9px;height:2px;background:#c8c8c8;"></div>
<svg class="r" style="left:23px;top:910px;" width="15" height="15" viewBox="0 0 15 15"><rect x="0" y="0" width="15" height="15" fill="#d8d8d8"/><rect x="7" y="0" width="1.5" height="8" fill="#3b4453"/><rect x="0" y="7" width="8.5" height="1.5" fill="#3b4453"/></svg>
<div class="t" style="left:43px;top:909px;font-size:11.6px;color:#e8e8e8;font-weight:400;">Families</div>
<div class="r" style="left:9px;top:937px;width:8px;height:1px;background:#6a7282;opacity:.8"></div>
<div class="r" style="left:22px;top:936px;width:9px;height:2px;background:#c8c8c8;"></div>
<div class="r" style="left:25.5px;top:932.5px;width:2px;height:9px;background:#c8c8c8;"></div>
<div class="t" style="left:39px;top:929px;font-size:11.6px;color:#e8e8e8;font-weight:400;">Analytical Links</div>
<div class="r" style="left:9px;top:957px;width:8px;height:1px;background:#6a7282;opacity:.8"></div>
<div class="r" style="left:22px;top:956px;width:9px;height:2px;background:#c8c8c8;"></div>
<div class="r" style="left:25.5px;top:952.5px;width:2px;height:9px;background:#c8c8c8;"></div>
<div class="t" style="left:39px;top:949px;font-size:11.6px;color:#e8e8e8;font-weight:400;">Annotation Symbols</div>
<div class="r" style="left:9px;top:977px;width:8px;height:1px;background:#6a7282;opacity:.8"></div>
<div class="r" style="left:22px;top:976px;width:9px;height:2px;background:#c8c8c8;"></div>
<div class="t" style="left:39px;top:969px;font-size:11.6px;color:#e8e8e8;font-weight:400;">Generic Models</div>
<div class="r" style="left:9px;top:667px;width:1px;height:140px;background:transparent;border-left:1px dashed #5e6676"></div>
<div class="r" style="left:25px;top:687px;width:1px;height:10px;background:transparent;border-left:1px dashed #5e6676"></div>
<div class="r" style="left:25px;top:727px;width:1px;height:10px;background:transparent;border-left:1px dashed #5e6676"></div>
<div class="r" style="left:25px;top:767px;width:1px;height:10px;background:transparent;border-left:1px dashed #5e6676"></div>
<div class="r" style="left:25px;top:807px;width:1px;height:70px;background:transparent;border-left:1px dashed #5e6676"></div>
<div class="r" style="left:9px;top:927px;width:1px;height:55px;background:transparent;border-left:1px dashed #5e6676"></div>
<div class="r" style="left:0px;top:979px;width:310px;height:3px;background:#262c37;"></div>
<div class="r" style="left:291px;top:647px;width:18px;height:332px;background:#343b48;"></div>
<svg class="r" style="left:292px;top:649px;" width="14" height="14" viewBox="0 0 14 14"><path d="M3 9 L7 5 L11 9" stroke="#9aa2b0" stroke-width="1.6" fill="none"/></svg>
<div class="r" style="left:295px;top:667px;width:8px;height:120px;background:#6d7a8e;border-radius:4px"></div>
<svg class="r" style="left:292px;top:964px;" width="14" height="14" viewBox="0 0 14 14"><path d="M3 5 L7 9 L11 5" stroke="#9aa2b0" stroke-width="1.6" fill="none"/></svg>
<div class="r" style="left:312px;top:150px;width:1606px;height:22px;background:#485164;"></div>
<div class="r" style="left:311px;top:150px;width:128px;height:22px;background:#222833;"></div>
<svg class="r" style="left:316px;top:152px;" width="16" height="17" viewBox="0 0 16 17"><path d="M1 8 L8 1 L15 8 H12.5 V15.5 H3.5 V8Z" fill="none" stroke="#d8d8d8" stroke-width="1.4"/><path d="M1 8 L8 1 L15 8Z" fill="#d8d8d8"/></svg>
<div class="t" style="left:340px;top:153px;font-size:12px;color:#f0f0f0;font-weight:700;">Front</div>
<svg class="r" style="left:423px;top:153px;" width="12" height="12" viewBox="0 0 12 12"><path d="M1.5 1.5 L10.5 10.5 M10.5 1.5 L1.5 10.5" stroke="#c8c8c8" stroke-width="1.6"/></svg>
<svg class="r" style="left:1904px;top:154px;" width="13" height="12" viewBox="0 0 13 12"><rect x="2" y="1" width="9" height="1.3" fill="#c8c8c8"/><path d="M1 4 H12 L6.5 10Z" fill="#c8c8c8"/></svg>
<div class="r" style="left:312px;top:172px;width:1px;height:791px;background:#2a303a;"></div>
<div class="r" style="left:313px;top:172px;width:1589px;height:791px;background:#ffffff;"></div>
<div class="r" style="left:1902px;top:172px;width:16px;height:791px;background:#333a46;"></div>
<svg class="r" style="left:1903px;top:174px;" width="14" height="12" viewBox="0 0 14 12"><path d="M3 8 L7 4 L11 8" stroke="#9aa2b0" stroke-width="1.6" fill="none"/></svg>
<div class="r" style="left:1902px;top:188px;width:16px;height:1px;background:#3d4553;"></div>
<div class="r" style="left:1907px;top:583px;width:8px;height:17px;background:#6d7a8e;border-radius:4px"></div>
<div class="r" style="left:1902px;top:946px;width:16px;height:1px;background:#3d4553;"></div>
<svg class="r" style="left:1903px;top:949px;" width="14" height="12" viewBox="0 0 14 12"><path d="M3 4 L7 8 L11 4" stroke="#9aa2b0" stroke-width="1.6" fill="none"/></svg>
<div class="r" style="left:309px;top:963px;width:1609px;height:19px;background:#2e3540;"></div>
<div class="r" style="left:309px;top:979px;width:1609px;height:3px;background:#272d37;"></div>
<div class="t" style="left:338px;top:964px;font-size:11.6px;color:#e0e0e0;font-weight:400;">1 : 50</div>
<svg class="r" style="left:389px;top:964px;" width="180" height="16" viewBox="0 0 180 16"><rect x="1" y="2" width="16" height="13" fill="#d8d8d8"/><g stroke="#d0d0d0" stroke-width="1.1" fill="none"><path d="M25 5 L29 2 H39 V11 L35 15 H25Z M25 5 H35 V15 M35 5 L39 2"/></g><g stroke="#d0d0d0" stroke-width="1.2" fill="none"><path d="M50 15 V6 H60"/></g><circle cx="55" cy="2" r="0.8" fill="#5ac8e8"/><path d="M53 9 L59 15 M59 9 L53 15" stroke="#e04848" stroke-width="1.4"/><g stroke="#d0d0d0" stroke-width="1.2" fill="none"><path d="M74 15 V6 H84"/></g><circle cx="82" cy="10" r="3.3" fill="#5ac8e8"/><g stroke="#d0d0d0" stroke-width="1.3" fill="none"><circle cx="100" cy="10" r="3"/><circle cx="108" cy="10" r="3"/><path d="M100 5 L103 4 M108 5 L105 4"/></g><g stroke="#d0d0d0" stroke-width="1.2" fill="none"><path d="M120 2 V12 M120 4 H132 V8"/></g><circle cx="131" cy="11" r="3.3" fill="#5ac8e8"/><rect x="142" y="2" width="13" height="8" fill="#c8c8c8"/><rect x="140" y="11" width="10" height="2" fill="#c8c8c8"/><circle cx="155" cy="11" r="3.3" fill="#5ac8e8"/><path d="M176 4 L172 8 L176 12" stroke="#9aa2b0" stroke-width="1.4" fill="none"/></svg>
<div class="r" style="left:1218px;top:966px;width:19px;height:8px;background:#6d7a8e;border-radius:4px"></div>
<svg class="r" style="left:1889px;top:964px;" width="12" height="14" viewBox="0 0 12 14"><path d="M4 3 L8 7 L4 11" stroke="#9aa2b0" stroke-width="1.5" fill="none"/></svg>
<div class="r" style="left:1886px;top:963px;width:1px;height:16px;background:#3a4250;"></div>
<svg class="r" style="left:1904px;top:966px;" width="12" height="12" viewBox="0 0 12 12"><g fill="#8a92a0"><rect x="9" y="4" width="2.2" height="2.2"/><rect x="4" y="9" width="2.2" height="2.2"/><rect x="9" y="9" width="2.2" height="2.2"/></g></svg>
<svg class="r" style="left:0;top:0" width="1918" height="982" viewBox="0 0 1918 982"><defs><clipPath id="cv"><rect x="313" y="172" width="1589" height="790"/></clipPath></defs><g clip-path="url(#cv)"><line x1="549.5" y1="402" x2="549.5" y2="636" stroke="#f4e2f4" stroke-width="1" /><line x1="709.5" y1="402" x2="709.5" y2="636" stroke="#f4e2f4" stroke-width="1" /><line x1="755.5" y1="402" x2="755.5" y2="636" stroke="#f4e2f4" stroke-width="1" /><line x1="825.5" y1="402" x2="825.5" y2="636" stroke="#f4e2f4" stroke-width="1" /><line x1="1022.5" y1="402" x2="1022.5" y2="636" stroke="#f4e2f4" stroke-width="1" /><line x1="1102.5" y1="402" x2="1102.5" y2="636" stroke="#f4e2f4" stroke-width="1" /><line x1="1135.5" y1="402" x2="1135.5" y2="636" stroke="#f4e2f4" stroke-width="1" /><line x1="1216.5" y1="402" x2="1216.5" y2="636" stroke="#f4e2f4" stroke-width="1" /><line x1="1413.5" y1="402" x2="1413.5" y2="636" stroke="#f4e2f4" stroke-width="1" /><line x1="1483.5" y1="402" x2="1483.5" y2="636" stroke="#f4e2f4" stroke-width="1" /><line x1="1528.5" y1="402" x2="1528.5" y2="636" stroke="#f4e2f4" stroke-width="1" /><line x1="1690.5" y1="402" x2="1690.5" y2="636" stroke="#f4e2f4" stroke-width="1" /><line x1="453" y1="417.5" x2="1786" y2="417.5" stroke="#f4e2f4" stroke-width="1" /><line x1="453" y1="425.5" x2="1786" y2="425.5" stroke="#f4e2f4" stroke-width="1" /><line x1="453" y1="452.5" x2="1786" y2="452.5" stroke="#f4e2f4" stroke-width="1" /><line x1="453" y1="592.5" x2="1786" y2="592.5" stroke="#f4e2f4" stroke-width="1" /><line x1="453" y1="615.5" x2="1786" y2="615.5" stroke="#f4e2f4" stroke-width="1" /><line x1="453" y1="636.5" x2="1786" y2="636.5" stroke="#f4e2f4" stroke-width="1" /><line x1="508" y1="395.5" x2="1119" y2="395.5" stroke="#3a3a3a" stroke-width="1.1" /><line x1="321.8" y1="395" x2="1902" y2="395" stroke="#111" stroke-width="2.2" stroke-dasharray="36 27.5 1.5 26.76"/><polyline points="453,402 453,299.5 470,299.5 476.6,360 489.3,378.5 489.3,402" fill="none" stroke="#000" stroke-width="2.6" stroke-linejoin="round" /><polyline points="1786.0,402 1786.0,299.5 1769.0,299.5 1762.4,360 1749.7,378.5 1749.7,402" fill="none" stroke="#000" stroke-width="2.6" stroke-linejoin="round" /><line x1="453" y1="156.1" x2="453" y2="920" stroke="#a4dc8a" stroke-width="1.8" stroke-dasharray="18 17.5"/><line x1="1119" y1="156.1" x2="1119" y2="920" stroke="#a4dc8a" stroke-width="1.8" stroke-dasharray="18 17.5"/><line x1="1786" y1="156.1" x2="1786" y2="920" stroke="#a4dc8a" stroke-width="1.8" stroke-dasharray="18 17.5"/><line x1="413" y1="395" x2="1902" y2="395" stroke="#a4dc8a" stroke-width="2.4" stroke-dasharray="18 17.5"/><line x1="453" y1="387" x2="453" y2="402" stroke="#000" stroke-width="3" /><line x1="1786.0" y1="387" x2="1786.0" y2="402" stroke="#000" stroke-width="3" /><line x1="453" y1="402.3" x2="1786" y2="402.3" stroke="#6058c8" stroke-width="3.2" /><line x1="453" y1="402.5" x2="1786" y2="402.5" stroke="#8a84ec" stroke-width="1.2" /><line x1="453" y1="402" x2="453" y2="419" stroke="#8aa090" stroke-width="1.5" /><line x1="1786.0" y1="402" x2="1786.0" y2="419" stroke="#8aa090" stroke-width="1.5" /><line x1="773" y1="636.2" x2="1466.0" y2="636.2" stroke="#5a52bc" stroke-width="3.2" /><line x1="773" y1="636.5" x2="1466.0" y2="636.5" stroke="#8c86ea" stroke-width="1.0" /><path d="M453,418.5 L549,425 L697,451.7 Q711.7,454.5 714.5,466 L751,616 Q756,636.2 773,636.2" fill="none" stroke="#1212cc" stroke-width="2.6" stroke-linejoin="round"/><path d="M1786.0,418.5 L1690.0,425 L1542.0,451.7 Q1527.3,454.5 1524.5,466 L1488.0,616 Q1483.0,636.2 1466.0,636.2" fill="none" stroke="#1212cc" stroke-width="2.6" stroke-linejoin="round"/><path d="M780.0,592.5 L825.0,615.2" fill="none" stroke="#d42a2a" stroke-width="2.6" stroke-linejoin="round" stroke-linecap="round"/><path d="M1022.0,615.2 L1102.5,591.5 L1102.5,464 Q1102.5,455 1093.0,450.3 L1022.0,425.5" fill="none" stroke="#d42a2a" stroke-width="2.6" stroke-linejoin="round" stroke-linecap="round"/><path d="M825.0,425.5 L757.0,450.3 Q749.5,453.2 749.0,462" fill="none" stroke="#d42a2a" stroke-width="2.6" stroke-linejoin="round" stroke-linecap="round"/><path d="M1459.0,592.5 L1414.0,615.2" fill="none" stroke="#d42a2a" stroke-width="2.6" stroke-linejoin="round" stroke-linecap="round"/><path d="M1217.0,615.2 L1136.5,591.5 L1136.5,464 Q1136.5,455 1146.0,450.3 L1217.0,425.5" fill="none" stroke="#d42a2a" stroke-width="2.6" stroke-linejoin="round" stroke-linecap="round"/><path d="M1414.0,425.5 L1482.0,450.3 Q1489.5,453.2 1490.0,462" fill="none" stroke="#d42a2a" stroke-width="2.6" stroke-linejoin="round" stroke-linecap="round"/><line x1="825" y1="424.8" x2="1022" y2="424.8" stroke="#e48896" stroke-width="1.5" /><line x1="825" y1="426.3" x2="1022" y2="426.3" stroke="#b85a64" stroke-width="1.6" /><line x1="825" y1="614.5" x2="1022" y2="614.5" stroke="#e48896" stroke-width="1.5" /><line x1="825" y1="616.0" x2="1022" y2="616.0" stroke="#b85a64" stroke-width="1.6" /><line x1="1217.0" y1="424.8" x2="1414.0" y2="424.8" stroke="#e48896" stroke-width="1.5" /><line x1="1217.0" y1="426.3" x2="1414.0" y2="426.3" stroke="#b85a64" stroke-width="1.6" /><line x1="1217.0" y1="614.5" x2="1414.0" y2="614.5" stroke="#e48896" stroke-width="1.5" /><line x1="1217.0" y1="616.0" x2="1414.0" y2="616.0" stroke="#b85a64" stroke-width="1.6" /><line x1="780" y1="592.5" x2="749" y2="462" stroke="#e05858" stroke-width="2.2" /><line x1="1459.0" y1="592.5" x2="1490.0" y2="462" stroke="#e05858" stroke-width="2.2" /><line x1="453" y1="267.5" x2="1786" y2="267.5" stroke="#444" stroke-width="1" /><line x1="453.5" y1="258" x2="453.5" y2="276" stroke="#444" stroke-width="1" /><line x1="446.5" y1="273.5" x2="459.5" y2="260.5" stroke="#000" stroke-width="3.6" stroke-linecap="round"/><line x1="1119.5" y1="258" x2="1119.5" y2="276" stroke="#444" stroke-width="1" /><line x1="1112.5" y1="273.5" x2="1125.5" y2="260.5" stroke="#000" stroke-width="3.6" stroke-linecap="round"/><line x1="1786.5" y1="258" x2="1786.5" y2="276" stroke="#444" stroke-width="1" /><line x1="1779.5" y1="273.5" x2="1792.5" y2="260.5" stroke="#000" stroke-width="3.6" stroke-linecap="round"/><text x="785.5" y="253.2" font-family="Liberation Sans" font-size="13" fill="#383838" text-anchor="middle" dominant-baseline="central" letter-spacing="0.12" >LeftLaneWidth = 8700</text><text x="1451.5" y="253.2" font-family="Liberation Sans" font-size="13" fill="#383838" text-anchor="middle" dominant-baseline="central" letter-spacing="0.12" >RightLaneWidth = 8700</text><line x1="745" y1="334.5" x2="826" y2="334.5" stroke="#1d4596" stroke-width="1.8" /><line x1="745" y1="324" x2="745" y2="446" stroke="#1d4596" stroke-width="1.8" /><line x1="826" y1="324" x2="826" y2="389" stroke="#1d4596" stroke-width="1.8" /><line x1="738.5" y1="341.0" x2="751.5" y2="328.0" stroke="#173c8a" stroke-width="3.6" stroke-linecap="round"/><line x1="819.5" y1="341.0" x2="832.5" y2="328.0" stroke="#173c8a" stroke-width="3.6" stroke-linecap="round"/><rect x="770.5" y="312.5" width="33" height="17" fill="#fff" stroke="#b8c8e0" stroke-width="1"/><text x="787" y="320.2" font-family="Liberation Sans" font-size="13" fill="#1d3f8a" text-anchor="middle" dominant-baseline="central" letter-spacing="0.12" >1050</text><line x1="1022" y1="334.5" x2="1103" y2="334.5" stroke="#444" stroke-width="1" /><line x1="1022.5" y1="325" x2="1022.5" y2="388" stroke="#444" stroke-width="1" /><line x1="1103.5" y1="325" x2="1103.5" y2="388" stroke="#444" stroke-width="1" /><line x1="1015.5" y1="341.0" x2="1028.5" y2="328.0" stroke="#000" stroke-width="3.6" stroke-linecap="round"/><line x1="1096.5" y1="341.0" x2="1109.5" y2="328.0" stroke="#000" stroke-width="3.6" stroke-linecap="round"/><text x="1062.5" y="319.2" font-family="Liberation Sans" font-size="13" fill="#383838" text-anchor="middle" dominant-baseline="central" letter-spacing="0.12" >1050</text><line x1="1136" y1="334.5" x2="1217" y2="334.5" stroke="#444" stroke-width="1" /><line x1="1136.5" y1="325" x2="1136.5" y2="388" stroke="#444" stroke-width="1" /><line x1="1217.5" y1="325" x2="1217.5" y2="388" stroke="#444" stroke-width="1" /><line x1="1129.5" y1="341.0" x2="1142.5" y2="328.0" stroke="#000" stroke-width="3.6" stroke-linecap="round"/><line x1="1210.5" y1="341.0" x2="1223.5" y2="328.0" stroke="#000" stroke-width="3.6" stroke-linecap="round"/><text x="1176.5" y="319.2" font-family="Liberation Sans" font-size="13" fill="#383838" text-anchor="middle" dominant-baseline="central" letter-spacing="0.12" >1050</text><line x1="1413" y1="334.5" x2="1494" y2="334.5" stroke="#444" stroke-width="1" /><line x1="1413.5" y1="325" x2="1413.5" y2="388" stroke="#444" stroke-width="1" /><line x1="1494.5" y1="325" x2="1494.5" y2="445" stroke="#444" stroke-width="1" /><line x1="1406.5" y1="341.0" x2="1419.5" y2="328.0" stroke="#000" stroke-width="3.6" stroke-linecap="round"/><line x1="1487.5" y1="341.0" x2="1500.5" y2="328.0" stroke="#000" stroke-width="3.6" stroke-linecap="round"/><text x="1453.5" y="319.2" font-family="Liberation Sans" font-size="13" fill="#383838" text-anchor="middle" dominant-baseline="central" letter-spacing="0.12" >1050</text><rect x="1085" y="360" width="69.5" height="69.5" fill="none" stroke="#50a8d8" stroke-width="1.2"/><line x1="1119.5" y1="360" x2="1119.5" y2="429.5" stroke="#50a8d8" stroke-width="1.2" /><circle cx="1119.5" cy="395" r="4.5" fill="#111"/><line x1="549.5" y1="643" x2="549.5" y2="873" stroke="#444" stroke-width="1" /><line x1="709.5" y1="643" x2="709.5" y2="873" stroke="#444" stroke-width="1" /><line x1="755.5" y1="643" x2="755.5" y2="873" stroke="#444" stroke-width="1" /><line x1="1483.5" y1="643" x2="1483.5" y2="873" stroke="#444" stroke-width="1" /><line x1="1528.5" y1="643" x2="1528.5" y2="873" stroke="#444" stroke-width="1" /><line x1="1690.5" y1="643" x2="1690.5" y2="873" stroke="#444" stroke-width="1" /><line x1="1119.5" y1="643" x2="1119.5" y2="757" stroke="#444" stroke-width="1" /><line x1="755" y1="748.5" x2="1483" y2="748.5" stroke="#444" stroke-width="1" /><line x1="748.5" y1="755.0" x2="761.5" y2="742.0" stroke="#000" stroke-width="3.6" stroke-linecap="round"/><line x1="1112.5" y1="755.0" x2="1125.5" y2="742.0" stroke="#000" stroke-width="3.6" stroke-linecap="round"/><line x1="1476.5" y1="755.0" x2="1489.5" y2="742.0" stroke="#000" stroke-width="3.6" stroke-linecap="round"/><text x="936" y="734.2" font-family="Liberation Sans" font-size="13" fill="#383838" text-anchor="middle" dominant-baseline="central" letter-spacing="0.12" >EQ</text><text x="1300" y="734.2" font-family="Liberation Sans" font-size="13" fill="#383838" text-anchor="middle" dominant-baseline="central" letter-spacing="0.12" >EQ</text><line x1="755" y1="787.5" x2="1483" y2="787.5" stroke="#444" stroke-width="1" /><line x1="748.5" y1="793.5" x2="761.5" y2="780.5" stroke="#000" stroke-width="3.6" stroke-linecap="round"/><line x1="1476.5" y1="793.5" x2="1489.5" y2="780.5" stroke="#000" stroke-width="3.6" stroke-linecap="round"/><text x="1118" y="772.2" font-family="Liberation Sans" font-size="13" fill="#383838" text-anchor="middle" dominant-baseline="central" letter-spacing="0.12" >DeckBottomWidth = 9500</text><line x1="549" y1="864.5" x2="755" y2="864.5" stroke="#444" stroke-width="1" /><line x1="1483" y1="864.5" x2="1690.5" y2="864.5" stroke="#444" stroke-width="1" /><line x1="542.5" y1="870.5" x2="555.5" y2="857.5" stroke="#000" stroke-width="3.6" stroke-linecap="round"/><line x1="703.0" y1="870.5" x2="716.0" y2="857.5" stroke="#000" stroke-width="3.6" stroke-linecap="round"/><line x1="748.5" y1="870.5" x2="761.5" y2="857.5" stroke="#000" stroke-width="3.6" stroke-linecap="round"/><line x1="1476.5" y1="870.5" x2="1489.5" y2="857.5" stroke="#000" stroke-width="3.6" stroke-linecap="round"/><line x1="1522.0" y1="870.5" x2="1535.0" y2="857.5" stroke="#000" stroke-width="3.6" stroke-linecap="round"/><line x1="1684.0" y1="870.5" x2="1697.0" y2="857.5" stroke="#000" stroke-width="3.6" stroke-linecap="round"/><text x="628" y="848.7" font-family="Liberation Sans" font-size="13" fill="#383838" text-anchor="middle" dominant-baseline="central" letter-spacing="0.12" >2100</text><text x="732" y="848.7" font-family="Liberation Sans" font-size="13" fill="#383838" text-anchor="middle" dominant-baseline="central" letter-spacing="0.12" >600</text><text x="1505" y="848.7" font-family="Liberation Sans" font-size="13" fill="#383838" text-anchor="middle" dominant-baseline="central" letter-spacing="0.12" >600</text><text x="1609.5" y="848.7" font-family="Liberation Sans" font-size="13" fill="#383838" text-anchor="middle" dominant-baseline="central" letter-spacing="0.12" >2100</text><line x1="414" y1="592.5" x2="446" y2="592.5" stroke="#444" stroke-width="1" /><line x1="414" y1="615.5" x2="446" y2="615.5" stroke="#444" stroke-width="1" /><line x1="422.5" y1="592" x2="422.5" y2="615" stroke="#444" stroke-width="1" /><line x1="415.5" y1="585.5" x2="428.5" y2="598.5" stroke="#000" stroke-width="3.6" stroke-linecap="round"/><line x1="415.5" y1="608.5" x2="428.5" y2="621.5" stroke="#000" stroke-width="3.6" stroke-linecap="round"/><text x="409" y="602.7" font-family="Liberation Sans" font-size="13" fill="#383838" text-anchor="middle" dominant-baseline="central" letter-spacing="0.12" transform="rotate(-90 409 603.5)" >300</text><line x1="458" y1="615.5" x2="497" y2="615.5" stroke="#444" stroke-width="1" /><line x1="455" y1="636.5" x2="519" y2="636.5" stroke="#444" stroke-width="1" /><line x1="486.5" y1="615" x2="486.5" y2="636" stroke="#444" stroke-width="1" /><line x1="480.0" y1="608.5" x2="493.0" y2="621.5" stroke="#000" stroke-width="3.6" stroke-linecap="round"/><line x1="480.0" y1="629.5" x2="493.0" y2="642.5" stroke="#000" stroke-width="3.6" stroke-linecap="round"/><text x="474" y="624.2" font-family="Liberation Sans" font-size="13" fill="#383838" text-anchor="middle" dominant-baseline="central" letter-spacing="0.12" transform="rotate(-90 474 625)" >BottomSlabThickness = 280</text><line x1="508.5" y1="395" x2="508.5" y2="636" stroke="#444" stroke-width="1" /><line x1="503.5" y1="629.5" x2="516.5" y2="642.5" stroke="#000" stroke-width="3.6" stroke-linecap="round"/><line x1="503.5" y1="389.5" x2="516.5" y2="402.5" stroke="#000" stroke-width="3.6" stroke-linecap="round"/><line x1="505.5" y1="395.5" x2="518.5" y2="408.5" stroke="#000" stroke-width="3.6" stroke-linecap="round"/><text x="497.5" y="514.7" font-family="Liberation Sans" font-size="13" fill="#383838" text-anchor="middle" dominant-baseline="central" letter-spacing="0.12" transform="rotate(-90 497.5 515.5)" >DeckBottomOffset = 2450</text><text x="500" y="397.7" font-family="Liberation Sans" font-size="13" fill="#383838" text-anchor="middle" dominant-baseline="central" letter-spacing="0.12" transform="rotate(-90 500 398.5)" >AsphaltThickness = 100</text><line x1="936.5" y1="402" x2="936.5" y2="425.5" stroke="#444" stroke-width="1" /><line x1="930.0" y1="396.0" x2="943.0" y2="409.0" stroke="#000" stroke-width="3.6" stroke-linecap="round"/><line x1="930.0" y1="419.0" x2="943.0" y2="432.0" stroke="#000" stroke-width="3.6" stroke-linecap="round"/><text x="922.5" y="412.7" font-family="Liberation Sans" font-size="13" fill="#383838" text-anchor="middle" dominant-baseline="central" letter-spacing="0.12" transform="rotate(-90 922.5 413.5)" >TopSlabThickness = 300</text><line x1="1003.5" y1="425.5" x2="1003.5" y2="452" stroke="#444" stroke-width="1" /><line x1="990" y1="452.5" x2="1010" y2="452.5" stroke="#444" stroke-width="1" /><line x1="996.5" y1="419.0" x2="1009.5" y2="432.0" stroke="#000" stroke-width="3.6" stroke-linecap="round"/><line x1="996.5" y1="445.5" x2="1009.5" y2="458.5" stroke="#000" stroke-width="3.6" stroke-linecap="round"/><text x="990.5" y="437.7" font-family="Liberation Sans" font-size="13" fill="#383838" text-anchor="middle" dominant-baseline="central" letter-spacing="0.12" transform="rotate(-90 990.5 438.5)" >350</text><line x1="1145" y1="417.5" x2="1178" y2="417.5" stroke="#444" stroke-width="1" /><line x1="1145" y1="425.5" x2="1178" y2="425.5" stroke="#444" stroke-width="1" /><line x1="1163.8" y1="411.5" x2="1176.8" y2="424.5" stroke="#000" stroke-width="3.6" stroke-linecap="round"/><line x1="1163.5" y1="418.9" x2="1176.5" y2="431.9" stroke="#000" stroke-width="3.6" stroke-linecap="round"/><text x="1156" y="420.2" font-family="Liberation Sans" font-size="13" fill="#383838" text-anchor="middle" dominant-baseline="central" letter-spacing="0.12" transform="rotate(-90 1156 421)" >100</text><text x="1118.5" y="499.2" font-family="Liberation Sans" font-size="13" fill="#383838" text-anchor="middle" dominant-baseline="central" letter-spacing="0.12" >WebThickness = 450</text><line x1="1102.5" y1="514.5" x2="1136.5" y2="514.5" stroke="#444" stroke-width="1" /><line x1="1096.0" y1="520.5" x2="1109.0" y2="507.5" stroke="#000" stroke-width="3.6" stroke-linecap="round"/><line x1="1130.0" y1="520.5" x2="1143.0" y2="507.5" stroke="#000" stroke-width="3.6" stroke-linecap="round"/><text x="1119.5" y="535.7" font-family="Liberation Sans" font-size="12" fill="#383838" text-anchor="middle" dominant-baseline="central" letter-spacing="0.12" >EQEQ</text><line x1="1102.5" y1="549.5" x2="1136.5" y2="549.5" stroke="#444" stroke-width="1" /><line x1="1119.5" y1="540" x2="1119.5" y2="558" stroke="#444" stroke-width="1" /><line x1="1096.0" y1="556.0" x2="1109.0" y2="543.0" stroke="#000" stroke-width="3.6" stroke-linecap="round"/><line x1="1112.5" y1="556.0" x2="1125.5" y2="543.0" stroke="#000" stroke-width="3.6" stroke-linecap="round"/><line x1="1130.0" y1="556.0" x2="1143.0" y2="543.0" stroke="#000" stroke-width="3.6" stroke-linecap="round"/><text x="683" y="462.2" font-family="Liberation Sans" font-size="13" fill="#383838" text-anchor="middle" dominant-baseline="central" letter-spacing="0.12" transform="rotate(-51.3 683 463)" >FilletRadius = 450</text><polygon points="704.0,455.5 700.2,467.9 699.0,461.5 692.5,461.6" fill="#000" stroke="#000" stroke-width="1.5" stroke-linejoin="round"/><line x1="683" y1="481" x2="696.3715129656669" y2="464.7631628274046" stroke="#222" stroke-width="0.9" /><line x1="678" y1="476" x2="688" y2="486" stroke="#222" stroke-width="0.9" /><line x1="678" y1="486" x2="688" y2="476" stroke="#222" stroke-width="0.9" /><text x="756" y="447.2" font-family="Liberation Sans" font-size="13" fill="#383838" text-anchor="middle" dominant-baseline="central" letter-spacing="0.12" transform="rotate(-15 756 448)" >150</text><polygon points="748.0,459.0 735.3,461.9 740.3,457.7 737.0,452.0" fill="#000" stroke="#000" stroke-width="1.5" stroke-linejoin="round"/><line x1="725" y1="455" x2="736.1774589421639" y2="456.943905902985" stroke="#222" stroke-width="0.9" /><line x1="752" y1="456" x2="762" y2="466" stroke="#222" stroke-width="0.9" /><line x1="752" y1="466" x2="762" y2="456" stroke="#222" stroke-width="0.9" /><text x="752" y="548.2" font-family="Liberation Sans" font-size="13" fill="#383838" text-anchor="middle" dominant-baseline="central" letter-spacing="0.12" transform="rotate(-16.5 752 549)" >WebThickness = 450</text><line x1="737" y1="563" x2="771" y2="554.5" stroke="#444" stroke-width="0.9" /><line x1="730.5" y1="569.5" x2="743.5" y2="556.5" stroke="#000" stroke-width="3.6" stroke-linecap="round"/><line x1="764.5" y1="561.0" x2="777.5" y2="548.0" stroke="#000" stroke-width="3.6" stroke-linecap="round"/><text x="765" y="610.2" font-family="Liberation Sans" font-size="13" fill="#383838" text-anchor="middle" dominant-baseline="central" letter-spacing="0.12" transform="rotate(-62.7 765 611)" >FilletRadius = 450</text><polygon points="772.0,633.0 770.4,620.1 774.1,625.5 780.1,622.8" fill="#000" stroke="#000" stroke-width="1.5" stroke-linejoin="round"/><line x1="781" y1="601" x2="775.2489469230194" y2="621.4481887181532" stroke="#222" stroke-width="0.9" /><line x1="776" y1="596" x2="786" y2="606" stroke="#222" stroke-width="0.9" /><line x1="776" y1="606" x2="786" y2="596" stroke="#222" stroke-width="0.9" /><text x="1094" y="446.7" font-family="Liberation Sans" font-size="13" fill="#383838" text-anchor="middle" dominant-baseline="central" letter-spacing="0.12" transform="rotate(-25 1094 447.5)" >150</text><polygon points="1101.0,456.5 1111.2,448.4 1108.5,454.4 1113.9,458.0" fill="#000" stroke="#000" stroke-width="1.5" stroke-linejoin="round"/><line x1="1124" y1="450" x2="1112.5477128372863" y2="453.23651593728863" stroke="#222" stroke-width="0.9" /><line x1="1085.6" y1="455.6" x2="1095.6" y2="465.6" stroke="#222" stroke-width="0.9" /><line x1="1085.6" y1="465.6" x2="1095.6" y2="455.6" stroke="#222" stroke-width="0.9" /><text x="1153.5" y="448.7" font-family="Liberation Sans" font-size="13" fill="#383838" text-anchor="middle" dominant-baseline="central" letter-spacing="0.12" transform="rotate(55 1153.5 449.5)" >150</text><polygon points="1141.5,452.0 1130.5,445.1 1137.0,445.6 1138.6,439.3" fill="#000" stroke="#000" stroke-width="1.5" stroke-linejoin="round"/><line x1="1128" y1="433" x2="1134.5495144137296" y2="442.21783510080473" stroke="#222" stroke-width="0.9" /><line x1="1143" y1="455.6" x2="1153" y2="465.6" stroke="#222" stroke-width="0.9" /><line x1="1143" y1="465.6" x2="1153" y2="455.6" stroke="#222" stroke-width="0.9" /><text x="1484.5" y="446.2" font-family="Liberation Sans" font-size="13" fill="#383838" text-anchor="middle" dominant-baseline="central" letter-spacing="0.12" transform="rotate(-15 1484.5 447)" >150</text><polygon points="1492.0,459.0 1502.9,451.9 1499.7,457.6 1504.7,461.8" fill="#000" stroke="#000" stroke-width="1.5" stroke-linejoin="round"/><line x1="1514" y1="455" x2="1503.8064389211988" y2="456.8533747416002" stroke="#222" stroke-width="0.9" /><line x1="1476" y1="454" x2="1486" y2="464" stroke="#222" stroke-width="0.9" /><line x1="1476" y1="464" x2="1486" y2="454" stroke="#222" stroke-width="0.9" /><text x="1548" y="464.2" font-family="Liberation Sans" font-size="13" fill="#383838" text-anchor="middle" dominant-baseline="central" letter-spacing="0.12" transform="rotate(28.3 1548 465)" >FilletRadius = 450</text><polygon points="1526.0,467.0 1539.0,467.5 1533.1,470.3 1534.8,476.6" fill="#000" stroke="#000" stroke-width="1.5" stroke-linejoin="round"/><line x1="1556.5" y1="481" x2="1536.905954548644" y2="472.00601192396783" stroke="#222" stroke-width="0.9" /><line x1="1551.5" y1="476" x2="1561.5" y2="486" stroke="#222" stroke-width="0.9" /><line x1="1551.5" y1="486" x2="1561.5" y2="476" stroke="#222" stroke-width="0.9" /><text x="1494" y="525.2" font-family="Liberation Sans" font-size="13" fill="#383838" text-anchor="middle" dominant-baseline="central" letter-spacing="0.12" transform="rotate(15.7 1494 526)" >WebThickness = 450</text><line x1="1472" y1="533.7" x2="1506.3" y2="541" stroke="#444" stroke-width="0.9" /><line x1="1465.5" y1="540.2" x2="1478.5" y2="527.2" stroke="#000" stroke-width="3.6" stroke-linecap="round"/><line x1="1499.8" y1="547.5" x2="1512.8" y2="534.5" stroke="#000" stroke-width="3.6" stroke-linecap="round"/><text x="1476" y="602.2" font-family="Liberation Sans" font-size="13" fill="#383838" text-anchor="middle" dominant-baseline="central" letter-spacing="0.12" transform="rotate(36.7 1476 603)" >FilletRadius = 450</text><polygon points="1484.0,622.0 1471.3,619.1 1477.7,617.5 1477.1,611.0" fill="#000" stroke="#000" stroke-width="1.5" stroke-linejoin="round"/><line x1="1456" y1="602" x2="1474.2351983455192" y2="615.0251416753708" stroke="#222" stroke-width="0.9" /><line x1="1451" y1="597" x2="1461" y2="607" stroke="#222" stroke-width="0.9" /><line x1="1451" y1="607" x2="1461" y2="597" stroke="#222" stroke-width="0.9" /></g></svg>
<svg class="r" style="left:1707px;top:194px;" width="38" height="21" viewBox="0 0 38 21"><rect x="1" y="1" width="36" height="19" rx="9.5" fill="#a9a9a9"/><circle cx="10.5" cy="10.5" r="6.5" fill="#fff"/></svg>
<div class="t" style="left:1747px;top:189px;font-size:11.6px;color:#858585;font-weight:400;letter-spacing:0.1px">Accelerated Graphics</div>
<div class="t" style="left:1747px;top:202px;font-size:11.6px;color:#858585;font-weight:400;font-style:italic;letter-spacing:0.2px">Tech Preview</div>
<div class="r" style="left:1873px;top:173px;width:28px;height:93px;background:#f5f5f5;box-sizing:border-box;border:1px solid #c6c6c6;border-radius:4px;box-shadow:1px 1px 1px #ddd"></div>
<svg class="r" style="left:1874px;top:174px;" width="26" height="90" viewBox="0 0 26 90"><circle cx="20" cy="5" r="3" fill="none" stroke="#aaa" stroke-width="1"/><circle cx="20" cy="84" r="3" fill="none" stroke="#aaa" stroke-width="1"/><path d="M17 18 A7 7 0 1 0 13 30 L17 30Z" fill="none" stroke="#b0b0b0" stroke-width="1.2"/><circle cx="12" cy="24" r="3.5" fill="none" stroke="#b0b0b0" stroke-width="1"/><text x="15" y="34" font-family="Liberation Sans" font-size="7" font-weight="700" fill="#7aa0c8">2D</text><path d="M11 42 L15 42 L13 44Z" fill="#888"/><line x1="3" y1="49" x2="25" y2="49" stroke="#ccc"/><rect x="7" y="56" width="9" height="9" fill="#a8d090"/><circle cx="16" cy="63" r="3" fill="none" stroke="#999" stroke-width="1.1"/><line x1="18" y1="65" x2="21" y2="68" stroke="#999" stroke-width="1.2"/><path d="M11 73 L15 73 L13 75Z" fill="#888"/></svg>
</body></html>
